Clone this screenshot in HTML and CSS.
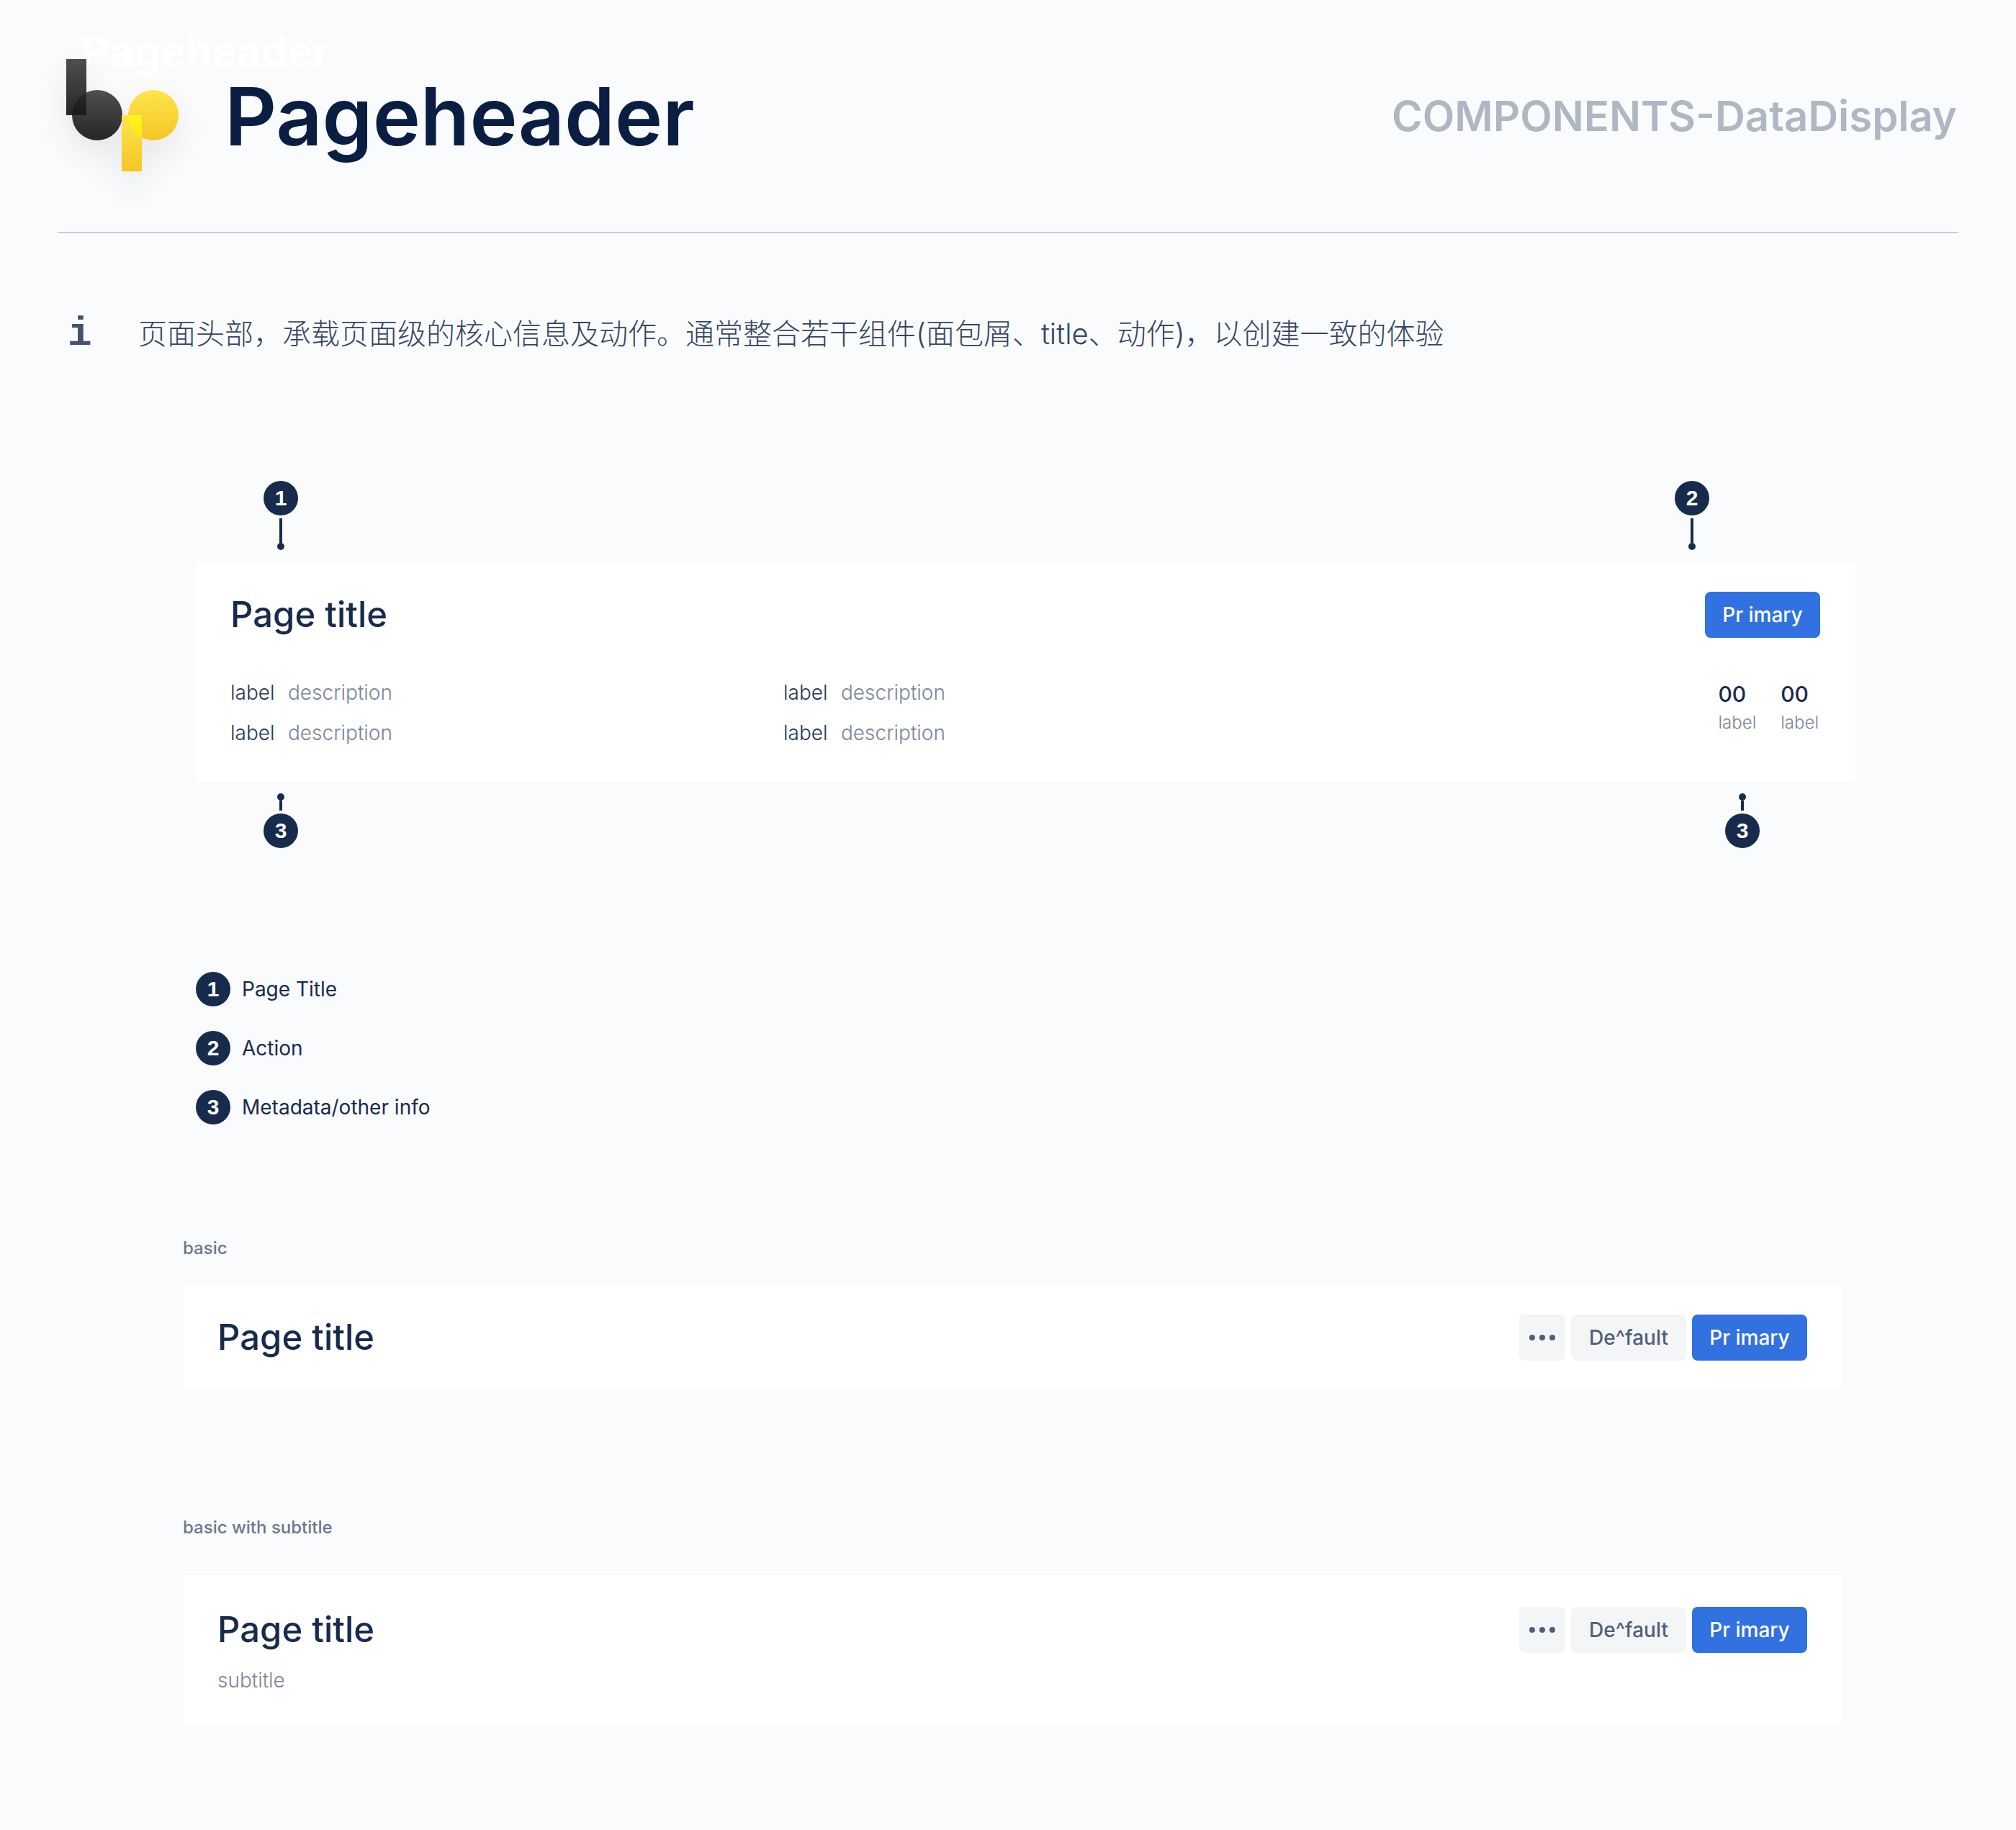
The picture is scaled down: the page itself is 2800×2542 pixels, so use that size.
FILE: index.html
```html
<!DOCTYPE html>
<html lang="zh-CN">
<head>
<meta charset="utf-8">
<meta name="viewport" content="width=device-width, initial-scale=1">
<title>Pageheader</title>
<link rel="stylesheet" href="styles.css">
</head>
<body>
<header class="masthead">
  <span class="ghost ghost-title" aria-hidden="true">Pageheader</span>
  <span class="ghost ghost-group" aria-hidden="true">COMPONENTS-DataDisplay</span>
  <svg class="logo" viewBox="0 0 156 156" role="img" aria-label="bp">
    <defs>
      <linearGradient id="dark" x1="0" y1="0" x2="0" y2="1">
        <stop offset="0" stop-color="#4f4f4f"/><stop offset="1" stop-color="#262626"/>
      </linearGradient>
      <linearGradient id="yellow" x1="0" y1="0" x2="0" y2="1">
        <stop offset="0" stop-color="#fce54b"/><stop offset="1" stop-color="#f5c623"/>
      </linearGradient>
      <linearGradient id="darkOverlap" gradientUnits="userSpaceOnUse" x1="0" y1="43" x2="0" y2="78">
        <stop offset="0" stop-color="#2b2b2b"/><stop offset="1" stop-color="#191919"/>
      </linearGradient>
      <linearGradient id="yellowOverlap" gradientUnits="userSpaceOnUse" x1="0" y1="78" x2="0" y2="110">
        <stop offset="0" stop-color="#fff420"/><stop offset="1" stop-color="#fce811"/>
      </linearGradient>
      <clipPath id="leftBar"><rect x="0" y="0" width="28" height="78"/></clipPath>
      <clipPath id="rightBar"><rect x="77" y="78" width="28" height="78"/></clipPath>
    </defs>
    <rect x="0" y="0" width="28" height="78" fill="url(#dark)"/>
    <circle cx="43" cy="78" r="35" fill="url(#dark)"/>
    <circle cx="43" cy="78" r="35" fill="url(#darkOverlap)" clip-path="url(#leftBar)"/>
    <circle cx="121" cy="78" r="35" fill="url(#yellow)"/>
    <rect x="77" y="78" width="28" height="78" fill="url(#yellow)"/>
    <circle cx="121" cy="78" r="35" fill="url(#yellowOverlap)" clip-path="url(#rightBar)"/>
  </svg>
  <h1 class="masthead-title">Pageheader</h1>
  <p class="masthead-group">COMPONENTS-DataDisplay</p>
</header>

<main>
  <div class="intro">
    <span class="intro-icon" aria-hidden="true">i</span>
    <p class="intro-text">页面头部，承载页面级的核心信息及动作。通常整合若干组件(面包屑、title、动作)，以创建一致的体验</p>
  </div>

  <section class="anatomy">
    <div class="pins pins-top">
      <div class="pin"><span class="badge">1</span><span class="pin-line"></span><span class="pin-dot"></span></div>
      <div class="pin"><span class="badge">2</span><span class="pin-line"></span><span class="pin-dot"></span></div>
    </div>

    <article class="card card-detail">
      <div class="card-head">
        <h2 class="card-title">Page title</h2>
        <div class="actions"><button type="button" class="btn btn-primary">Pr imary</button></div>
      </div>
      <div class="meta">
        <dl class="fields">
          <div class="field"><dt>label</dt><dd>description</dd></div>
          <div class="field"><dt>label</dt><dd>description</dd></div>
        </dl>
        <dl class="fields">
          <div class="field"><dt>label</dt><dd>description</dd></div>
          <div class="field"><dt>label</dt><dd>description</dd></div>
        </dl>
        <dl class="stats">
          <div class="stat"><dd>00</dd><dt>label</dt></div>
          <div class="stat"><dd>00</dd><dt>label</dt></div>
        </dl>
      </div>
    </article>

    <div class="pins pins-bottom">
      <div class="pin"><span class="pin-dot"></span><span class="pin-line"></span><span class="badge">3</span></div>
      <div class="pin"><span class="pin-dot"></span><span class="pin-line"></span><span class="badge">3</span></div>
    </div>

    <ul class="legend">
      <li><span class="badge">1</span>Page Title</li>
      <li><span class="badge">2</span>Action</li>
      <li><span class="badge">3</span>Metadata/other info</li>
    </ul>
  </section>

  <section class="example example-basic">
    <h3 class="example-name">basic</h3>
    <article class="card">
      <div class="card-head">
        <h2 class="card-title">Page title</h2>
        <div class="actions">
          <button type="button" class="btn btn-more" aria-label="More"><span></span><span></span><span></span></button>
          <button type="button" class="btn">De^fault</button>
          <button type="button" class="btn btn-primary">Pr imary</button>
        </div>
      </div>
    </article>
  </section>

  <section class="example example-subtitle">
    <h3 class="example-name">basic with subtitle</h3>
    <article class="card card-subtitled">
      <div class="card-head">
        <h2 class="card-title">Page title</h2>
        <div class="actions">
          <button type="button" class="btn btn-more" aria-label="More"><span></span><span></span><span></span></button>
          <button type="button" class="btn">De^fault</button>
          <button type="button" class="btn btn-primary">Pr imary</button>
        </div>
      </div>
      <p class="card-subtitle">subtitle</p>
    </article>
  </section>
</main>
</body>
</html>
```
FILE: styles.css
```css
* { box-sizing: border-box; }

body, h1, h2, h3, p, dl, dd, ul { margin: 0; padding: 0; }

body {
  background: #fafbfd;
  color: #172b4d;
  font-family: Inter, "Noto Sans CJK SC", sans-serif;
  font-size: 28px;
}

/* Masthead */
.masthead {
  position: relative;
  display: flex;
  align-items: center;
  margin: 0 80px;
  padding: 82px 2px 84px 12px;
  border-bottom: 2px solid #c7ced6;
}

.logo {
  position: relative;
  width: 156px;
  height: 156px;
  overflow: visible;
  filter: drop-shadow(0 20px 20px rgba(0, 0, 0, 0.08));
}

.masthead-title {
  margin-left: 64px;
  padding-top: 2px;
  color: #091e42;
  font-size: 112px;
  font-weight: 600;
  line-height: 154px;
}

.masthead-group {
  margin-left: auto;
  padding-top: 2px;
  color: #b0b7c4;
  font-size: 58px;
  font-weight: 600;
  line-height: 80px;
}

.ghost {
  position: absolute;
  top: 42px;
  font-family: "Liberation Sans", Arial, sans-serif;
  font-size: 61px;
  font-weight: 700;
  line-height: 60px;
}

.ghost-title { left: 32px; color: #ffffff; }
.ghost-group { left: 1402px; color: #fbfdfd; }

/* Introduction */
.intro {
  display: flex;
  gap: 64px;
  margin-top: 110px;
  padding: 0 94px;
  line-height: 60px;
}

.intro-icon {
  width: 34px;
  color: #44546f;
  font-family: "Liberation Mono", monospace;
  font-size: 56px;
  font-weight: 700;
}

.intro-text {
  color: #344563;
  font-size: 40px;
  font-weight: 300;
}

/* Numbered pins */
.anatomy {
  margin-top: 174px;
  padding: 0 224px 0 272px;
}

.pins {
  display: flex;
  justify-content: space-between;
}

.pins-top { padding: 0 202px 18px 94px; }
.pins-bottom { padding: 16px 132px 0 94px; }

.pin {
  display: flex;
  flex-direction: column;
  align-items: center;
}

.pin-line {
  width: 4px;
  height: 34px;
  margin-top: 4px;
  background: #172b4d;
}

.pin-dot {
  width: 10px;
  height: 10px;
  border-radius: 50%;
  background: #172b4d;
}

.pins-bottom .pin-line {
  height: 14px;
  margin: 0 0 4px;
}

.badge {
  display: flex;
  align-items: center;
  justify-content: center;
  width: 48px;
  height: 48px;
  border-radius: 50%;
  background: #172b4d;
  color: #ffffff;
  font-family: "Liberation Sans", Arial, sans-serif;
  font-size: 30px;
  font-weight: 700;
  line-height: 48px;
}

.legend {
  display: flex;
  flex-direction: column;
  gap: 34px;
  margin-top: 172px;
  list-style: none;
}

.legend li {
  display: flex;
  align-items: center;
  gap: 16px;
  line-height: 48px;
}

/* Page header cards */
.card {
  padding: 40px 48px;
  background: #ffffff;
}

.card-detail { padding-bottom: 48px; }
.card-subtitled { padding-top: 44px; }

.card-head {
  display: flex;
  align-items: center;
  justify-content: space-between;
}

.card-title {
  font-size: 49px;
  font-weight: 500;
  line-height: 64px;
}

.card-subtitle {
  margin-top: 16px;
  color: #7a869a;
  font-weight: 300;
  line-height: 44px;
}

.actions {
  display: flex;
  gap: 8px;
}

.btn {
  min-width: 160px;
  height: 64px;
  padding: 0 16px;
  border: 0;
  border-radius: 8px;
  background: #f4f5f7;
  color: #505f79;
  font: inherit;
  font-weight: 500;
}

.btn-primary {
  background: #3171e0;
  color: #ffffff;
}

.btn-more {
  display: flex;
  align-items: center;
  justify-content: center;
  gap: 6px;
  min-width: 64px;
  padding: 0;
}

.btn-more span {
  flex: none;
  width: 8px;
  height: 8px;
  border-radius: 50%;
  background: #505f79;
}

/* Metadata */
.meta {
  display: grid;
  grid-template-columns: 8fr 8fr 7fr;
  margin-top: 56px;
}

.fields {
  display: flex;
  flex-direction: column;
  gap: 16px;
  line-height: 40px;
}

.field {
  display: flex;
  font-weight: 300;
}

.field dt {
  width: 80px;
  color: #253858;
}

.field dd { color: #7a869a; }

.stats {
  display: flex;
  justify-content: flex-end;
  gap: 34px;
  padding-right: 2px;
}

.stat dd {
  font-size: 30px;
  font-weight: 500;
  line-height: 44px;
}

.stat dt {
  color: #7a869a;
  font-size: 24px;
  font-weight: 300;
  line-height: 36px;
}

/* Examples */
.example { padding: 0 242px 0 254px; }
.example-basic { margin-top: 154px; }
.example-subtitle { margin-top: 174px; padding-bottom: 146px; }

.example-name {
  margin-bottom: 34px;
  color: #6b778c;
  font-size: 24px;
  font-weight: 500;
  line-height: 36px;
}

.example-subtitle .example-name { margin-bottom: 48px; }
```
